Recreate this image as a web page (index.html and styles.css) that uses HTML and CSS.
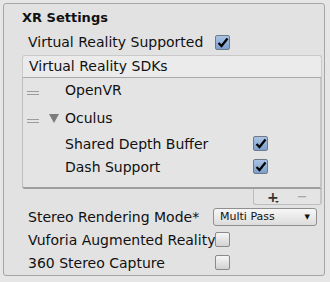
FILE: index.html
```html
<!DOCTYPE html>
<html lang="en">
<head>
    <meta charset="UTF-8">
    <title>XR Settings</title>
    <link rel="stylesheet" href="styles.css">
</head>
<body>

    <div class="panel">
        <div class="title">XR Settings</div>

        <div class="row first">
            <span class="label">Virtual Reality Supported</span>
            <span class="check on">
                <svg width="12" height="11" viewBox="0 0 12 11"><path d="M1.5 6 L4.5 9 L10.5 1.5" fill="none" stroke="#000" stroke-width="2.2"/></svg>
            </span>
        </div>

        <!-- SDK list -->
        <div class="list">
            <div class="list-head">Virtual Reality SDKs</div>
            <div class="list-body">
                <div class="item openvr">
                    <span class="handle"></span>
                    <span class="name">OpenVR</span>
                </div>
                <div class="item oculus">
                    <span class="handle"></span>
                    <span class="fold"></span>
                    <span class="name">Oculus</span>
                </div>
                <div class="item sub">
                    <span class="sublabel">Shared Depth Buffer</span>
                    <span class="check on">
                        <svg width="12" height="11" viewBox="0 0 12 11"><path d="M1.5 6 L4.5 9 L10.5 1.5" fill="none" stroke="#000" stroke-width="2.2"/></svg>
                    </span>
                </div>
                <div class="item sub">
                    <span class="sublabel">Dash Support</span>
                    <span class="check on">
                        <svg width="12" height="11" viewBox="0 0 12 11"><path d="M1.5 6 L4.5 9 L10.5 1.5" fill="none" stroke="#000" stroke-width="2.2"/></svg>
                    </span>
                </div>
            </div>
            <div class="list-foot">
                <div class="foot-tab">
                    <span class="plus">+<span class="caret"></span></span>
                    <span class="minus">&minus;</span>
                </div>
            </div>
        </div>

        <div class="row">
            <span class="label">Stereo Rendering Mode*</span>
            <span class="dropdown">Multi Pass <i>&#9660;</i></span>
        </div>
        <div class="row">
            <span class="label">Vuforia Augmented Reality</span>
            <span class="check"></span>
        </div>
        <div class="row">
            <span class="label">360 Stereo Capture</span>
            <span class="check"></span>
        </div>
    </div>

</body>
</html>
```

FILE: styles.css
```css
body {
    margin: 0;
    background-color: #e6e6e6;
    font-family: "DejaVu Sans", sans-serif;
    font-size: 14px;
    color: #111;
}

.panel {
    margin: 3px;
    width: 322px;
    height: 273px;
    box-sizing: border-box;
    border: 1px solid #a6a6a6;
    border-radius: 3px;
    background-color: #e2e2e2;
    padding-top: 4px;
}

.title {
    font-weight: bold;
    font-size: 13px;
    line-height: 20px;
    padding-left: 18px;
}

.row {
    display: flex;
    align-items: center;
    height: 23px;
    padding-left: 24px;
}

.row.first {
    margin-top: 3px;
    height: 22px;
    margin-bottom: 2px;
}

.label {
    width: 187px;
    flex: none;
    overflow: hidden;
    white-space: nowrap;
}

/* checkboxes */
.check {
    width: 13px;
    height: 13px;
    border: 1px solid #8a8a8a;
    border-radius: 2px;
    background: linear-gradient(#f6f6f6, #d2d2d2);
    display: flex;
    align-items: center;
    justify-content: center;
    flex: none;
}

.check.on {
    border-color: #6f7a88;
    background: linear-gradient(#a9c3e4, #7d9fcc);
}

/* list */
.list {
    margin-left: 18px;
    width: 300px;
}

.list-head {
    height: 21px;
    line-height: 21px;
    padding-left: 6px;
    background-color: #ebebeb;
    border: 1px solid #c9c9c9;
    border-bottom-color: #a9a9a9;
    border-radius: 3px 3px 0 0;
}

.list-body {
    height: 111px;
    box-sizing: border-box;
    background-color: #e4e4e4;
    border-left: 1px solid #bdbdbd;
    border-right: 2px solid #c4c4c4;
    border-bottom: 2px solid #9e9e9e;
    border-radius: 0 0 0 3px;
    padding-top: 1px;
}

.item {
    display: flex;
    align-items: center;
    height: 22px;
}

.item.oculus {
    margin-top: 6px;
    margin-bottom: 3px;
}

.item.sub {
    height: 23px;
}

.handle {
    width: 12px;
    height: 4px;
    margin-left: 4px;
    margin-top: 6px;
    border-top: 1px solid #9c9c9c;
    border-bottom: 1px solid #9c9c9c;
    box-sizing: border-box;
}

.fold {
    width: 0;
    height: 0;
    margin-left: 10px;
    border-left: 5px solid transparent;
    border-right: 5px solid transparent;
    border-top: 9px solid #7c7c7c;
}

.openvr .name {
    margin-left: 26px;
}

.oculus .name {
    margin-left: 6px;
}

.sublabel {
    margin-left: 42px;
    width: 188px;
    white-space: nowrap;
}

.list-foot {
    display: flex;
    justify-content: flex-end;
}

.foot-tab {
    width: 69px;
    height: 16px;
    box-sizing: border-box;
    background-color: #e4e4e4;
    border: 1px solid #bdbdbd;
    border-top: none;
    border-right: 2px solid #c4c4c4;
    border-radius: 0 0 3px 3px;
    display: flex;
    align-items: center;
    padding-left: 13px;
}

.plus {
    font-weight: bold;
    font-size: 14px;
    line-height: 14px;
    color: #333;
    position: relative;
}

.caret {
    position: absolute;
    left: 8px;
    top: 11px;
    width: 0;
    height: 0;
    border-left: 2px solid transparent;
    border-right: 2px solid transparent;
    border-top: 2px solid #333;
}

.minus {
    margin-left: 18px;
    font-size: 13px;
    line-height: 14px;
    color: #9a9a9a;
}

/* popup */
.dropdown {
    width: 104px;
    height: 18px;
    margin-left: -2px;
    box-sizing: border-box;
    border: 1px solid #8f8f8f;
    border-radius: 3px;
    background: linear-gradient(#f7f7f7, #dcdcdc);
    font-size: 11px;
    line-height: 16px;
    padding-left: 6px;
    position: relative;
}

.dropdown i {
    position: absolute;
    right: 6px;
    top: 0;
    font-style: normal;
    font-size: 7px;
}
```
